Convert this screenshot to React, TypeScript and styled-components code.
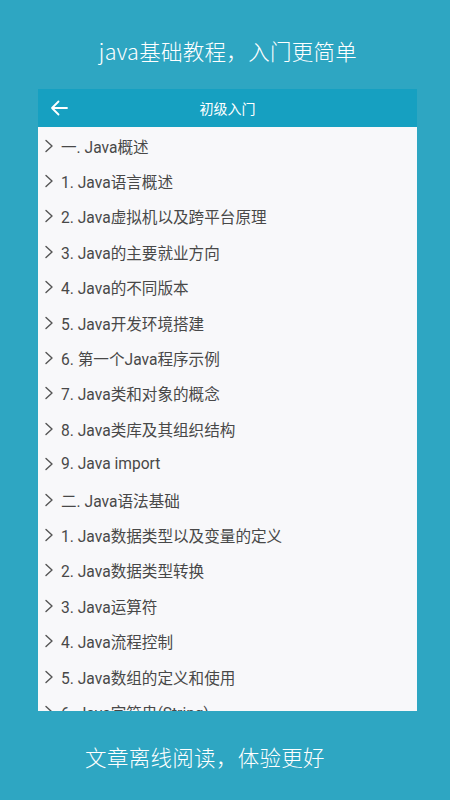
import React from "react";
import styled, { createGlobalStyle } from "styled-components";

const GlobalStyle = createGlobalStyle`
	html, body {
		margin: 0;
		padding: 0;
		background: #2ea6c2;
	}
	* { box-sizing: border-box; }
`;

const Screen = styled.div`
	width: 450px;
	height: 800px;
	background: #2ea6c2;
	display: flex;
	flex-direction: column;
	align-items: center;
	overflow: hidden;
	font-family: Roboto, "Noto Sans CJK SC", sans-serif;
`;

const Slogan = styled.div<{ $top: number; $shift: number }>`
	color: #ffffff;
	font-family: "Noto Sans CJK SC", sans-serif;
	font-weight: 300;
	font-size: 21.5px;
	line-height: 30px;
	letter-spacing: 0.3px;
	margin-top: ${(p) => p.$top}px;
	margin-right: ${(p) => p.$shift}px;
`;

const Panel = styled.div`
	width: 379px;
	height: 622px;
	display: flex;
	flex-direction: column;
	background: #f8f8fa;
	overflow: hidden;
	margin-top: 23px;
	margin-left: 5px;
`;

const Header = styled.div`
	height: 38px;
	flex-shrink: 0;
	background: #16a0c1;
	display: flex;
	align-items: center;
	position: relative;
	color: #ffffff;
`;

const BackButton = styled.div`
	width: 42px;
	display: flex;
	justify-content: center;
`;

const HeaderTitle = styled.div`
	position: absolute;
	left: 0;
	right: 0;
	text-align: center;
	font-family: "Noto Sans CJK SC", sans-serif;
	font-size: 14px;
	pointer-events: none;
`;

const List = styled.div`
	display: flex;
	flex-direction: column;
	padding-top: 1px;
`;

const Row = styled.div`
	height: 35.4px;
	flex-shrink: 0;
	display: flex;
	align-items: center;
	padding-left: 6px;
	gap: 7px;
	color: #484848;
	font-size: 15.6px;
`;

const Chevron = () => (
	<svg width="10" height="14" viewBox="0 0 10 14" fill="none">
		<path d="M2 1.5 L8 7 L2 12.5" stroke="#555" strokeWidth="1.4" strokeLinecap="round" strokeLinejoin="round" />
	</svg>
);

const items = [
	"一. Java概述",
	"1. Java语言概述",
	"2. Java虚拟机以及跨平台原理",
	"3. Java的主要就业方向",
	"4. Java的不同版本",
	"5. Java开发环境搭建",
	"6. 第一个Java程序示例",
	"7. Java类和对象的概念",
	"8. Java类库及其组织结构",
	"9. Java import",
	"二. Java语法基础",
	"1. Java数据类型以及变量的定义",
	"2. Java数据类型转换",
	"3. Java运算符",
	"4. Java流程控制",
	"5. Java数组的定义和使用",
	"6. Java字符串(String)",
];

const App: React.FC = () => {
	return (
		<>
			<GlobalStyle />
			<Screen>
				<Slogan $top={36} $shift={-6}>java基础教程，入门更简单</Slogan>
				<Panel>
					<Header>
						<BackButton>
							<svg width="20" height="18" viewBox="0 0 20 18" fill="none">
								<path d="M18 9 H3 M9.5 2.5 L3 9 L9.5 15.5" stroke="#fff" strokeWidth="1.8" strokeLinecap="round" strokeLinejoin="round" />
							</svg>
						</BackButton>
						<HeaderTitle>初级入门</HeaderTitle>
					</Header>
					<List>
						{items.map((t) => (
							<Row key={t}>
								<Chevron />
								<span>{t}</span>
							</Row>
						))}
					</List>
				</Panel>
				<Slogan $top={31} $shift={40}>文章离线阅读，体验更好</Slogan>
			</Screen>
		</>
	);
};

export default App;
